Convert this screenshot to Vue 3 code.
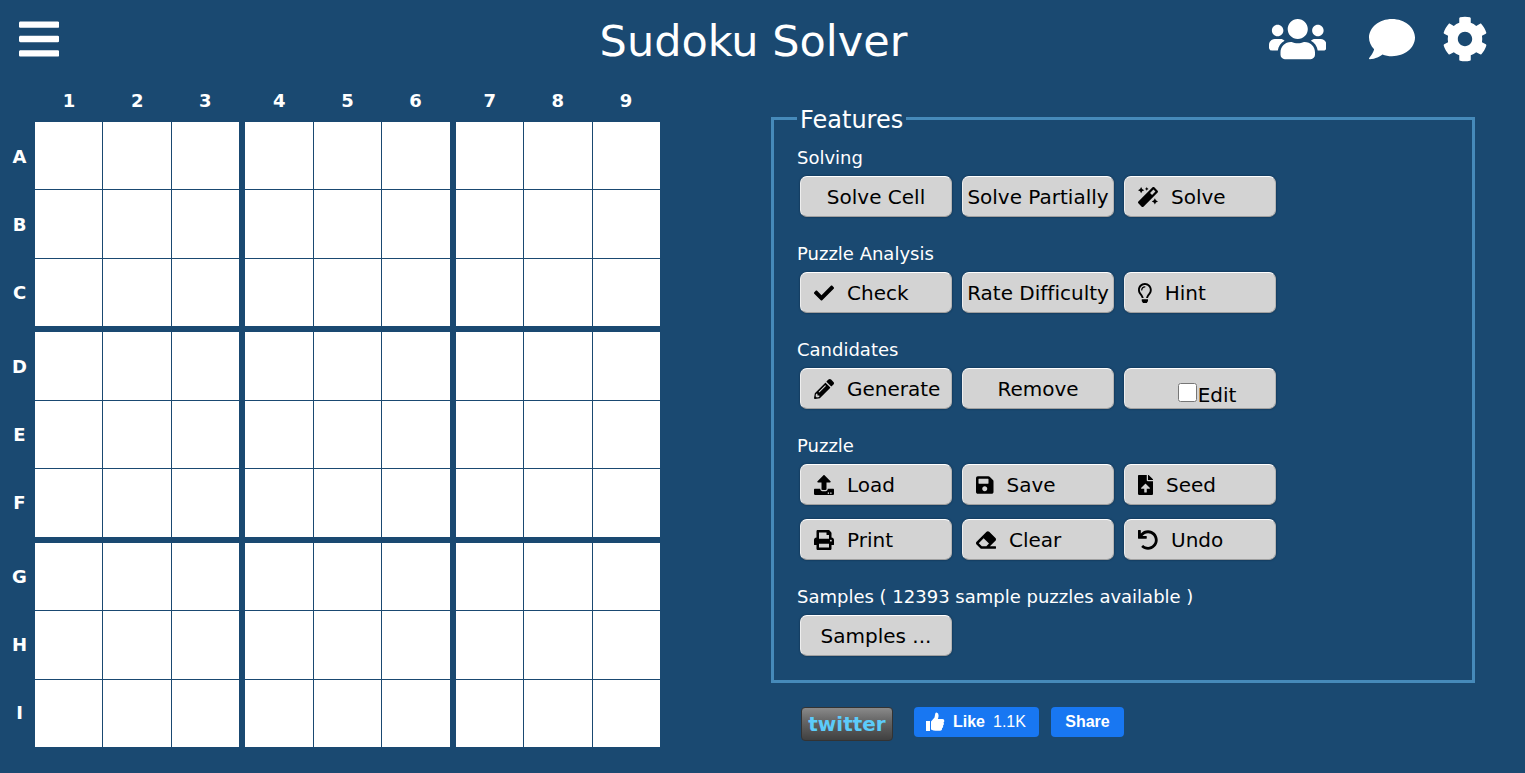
<script setup>
const blocks = [0, 1, 2]
const rowNames = ['A', 'B', 'C', 'D', 'E', 'F', 'G', 'H', 'I']

const icons = {
  bars: { w: 448, d: 'M16 132h416c8.837 0 16-7.163 16-16V76c0-8.837-7.163-16-16-16H16C7.163 60 0 67.163 0 76v40c0 8.837 7.163 16 16 16zm0 160h416c8.837 0 16-7.163 16-16v-40c0-8.837-7.163-16-16-16H16c-8.837 0-16 7.163-16 16v40c0 8.837 7.163 16 16 16zm0 160h416c8.837 0 16-7.163 16-16v-40c0-8.837-7.163-16-16-16H16c-8.837 0-16 7.163-16 16v40c0 8.837 7.163 16 16 16z' },
  users: { w: 640, d: 'M96 224c35.3 0 64-28.7 64-64s-28.7-64-64-64-64 28.7-64 64 28.7 64 64 64zm448 0c35.3 0 64-28.7 64-64s-28.7-64-64-64-64 28.7-64 64 28.7 64 64 64zm32 32h-64c-17.6 0-33.5 7.1-45.1 18.6 40.3 22.1 68.9 62 75.1 109.4h66c17.7 0 32-14.3 32-32v-32c0-35.3-28.7-64-64-64zm-256 0c61.9 0 112-50.1 112-112S381.9 32 320 32 208 82.1 208 144s50.1 112 112 112zm76.8 32h-8.3c-20.8 10-43.9 16-68.5 16s-47.6-6-68.5-16h-8.3C179.6 288 128 339.6 128 403.2V432c0 26.5 21.5 48 48 48h288c26.5 0 48-21.5 48-48v-28.8c0-63.6-51.6-115.2-115.2-115.2zm-223.7-13.4C161.5 263.1 145.6 256 128 256H64c-35.3 0-64 28.7-64 64v32c0 17.7 14.3 32 32 32h65.9c6.3-47.4 34.9-87.3 75.2-109.4z' },
  comment: { w: 512, d: 'M256 32C114.6 32 0 125.1 0 240c0 49.6 21.4 95 57 130.7C44.5 421.1 2.7 466 2.2 466.5c-2.2 2.3-2.8 5.7-1.5 8.7S4.8 480 8 480c66.3 0 116-31.8 140.6-51.4 32.7 12.3 69 19.4 107.4 19.4 141.4 0 256-93.1 256-208S397.4 32 256 32z' },
  cog: { w: 512, d: 'M487.4 315.7l-42.6-24.6c4.3-23.2 4.3-47 0-70.2l42.6-24.6c4.9-2.8 7.1-8.6 5.5-14-11.1-35.6-30-67.8-54.7-94.6-3.8-4.1-10-5.1-14.8-2.3L380.8 110c-17.9-15.4-38.5-27.3-60.8-35.1V25.8c0-5.6-3.9-10.5-9.4-11.7-36.7-8.2-74.3-7.8-109.2 0-5.5 1.2-9.4 6.1-9.4 11.7V75c-22.2 7.9-42.8 19.8-60.8 35.1L88.7 85.5c-4.9-2.8-11-1.9-14.8 2.3-24.7 26.7-43.6 58.9-54.7 94.6-1.7 5.4.6 11.2 5.5 14L67.3 221c-4.3 23.2-4.3 47 0 70.2l-42.6 24.6c-4.9 2.8-7.1 8.6-5.5 14 11.1 35.6 30 67.8 54.7 94.6 3.8 4.1 10 5.1 14.8 2.3l42.6-24.6c17.9 15.4 38.5 27.3 60.8 35.1v49.2c0 5.6 3.9 10.5 9.4 11.7 36.7 8.2 74.3 7.8 109.2 0 5.5-1.2 9.4-6.1 9.4-11.7v-49.2c22.2-7.9 42.8-19.8 60.8-35.1l42.6 24.6c4.9 2.8 11 1.9 14.8-2.3 24.7-26.7 43.6-58.9 54.7-94.6 1.5-5.5-.7-11.3-5.6-14.1zM256 336c-44.1 0-80-35.9-80-80s35.9-80 80-80 80 35.9 80 80-35.9 80-80 80z' },
  magic: { w: 512, d: 'M224 96l16-32 32-16-32-16-16-32-16 32-32 16 32 16 16 32zM80 160l26.66-53.33L160 80l-53.34-26.67L80 0 53.34 53.33 0 80l53.34 26.67L80 160zm352 128l-26.66 53.33L352 368l53.34 26.67L432 448l26.66-53.33L512 368l-53.34-26.67L432 288zm70.62-193.77L417.77 9.38C411.53 3.12 403.34 0 395.15 0c-8.19 0-16.38 3.12-22.63 9.38L9.38 372.52c-12.5 12.5-12.5 32.76 0 45.25l84.85 84.85c6.25 6.25 14.44 9.37 22.62 9.37 8.19 0 16.38-3.12 22.63-9.37l363.14-363.15c12.5-12.48 12.5-32.75 0-45.24zM359.45 203.46l-50.91-50.91 86.6-86.6 50.91 50.91-86.6 86.6z' },
  check: { w: 512, d: 'M173.898 439.404l-166.4-166.4c-9.997-9.997-9.997-26.206 0-36.204l36.203-36.204c9.997-9.998 26.207-9.998 36.204 0L192 312.69 432.095 72.596c9.997-9.997 26.207-9.997 36.204 0l36.203 36.204c9.997 9.997 9.997 26.206 0 36.204l-294.4 294.401c-9.998 9.997-26.207 9.997-36.204-.001z' },
  bulb: { w: 352, d: 'M176 80c-52.94 0-96 43.06-96 96 0 8.84 7.16 16 16 16s16-7.16 16-16c0-35.3 28.72-64 64-64 8.84 0 16-7.16 16-16s-7.16-16-16-16zM96.06 459.17c0 3.15.93 6.22 2.68 8.84l24.51 36.84c2.97 4.46 7.97 7.14 13.32 7.14h78.85c5.36 0 10.36-2.68 13.32-7.14l24.51-36.84c1.74-2.62 2.67-5.7 2.68-8.84l.05-43.18H96.02l.04 43.18zM176 0C73.72 0 0 82.97 0 176c0 44.37 16.45 84.85 43.56 115.78 16.64 18.99 42.74 58.8 52.42 92.16v.06h48v-.12c-.01-4.77-.72-9.51-2.15-14.07-5.59-17.81-22.82-64.77-62.17-109.67-20.54-23.43-31.52-53.15-31.61-84.14-.2-73.64 59.67-128 127.95-128 70.58 0 128 57.42 128 128 0 30.97-11.24 60.85-31.65 84.14-39.11 44.61-56.42 91.47-62.1 109.46a47.507 47.507 0 0 0-2.22 14.3v.1h48v-.05c9.68-33.37 35.78-73.18 52.42-92.16C335.55 260.85 352 220.37 352 176 352 78.8 273.2 0 176 0z' },
  pencil: { w: 512, d: 'M497.9 142.1l-46.1 46.1c-4.7 4.7-12.3 4.7-17 0l-111-111c-4.7-4.7-4.7-12.3 0-17l46.1-46.1c18.7-18.7 49.1-18.7 67.9 0l60.1 60.1c18.8 18.7 18.8 49.1 0 67.9zM284.2 99.8L21.6 362.4.4 483.9c-2.9 16.4 11.4 30.6 27.8 27.8l121.5-21.3 262.6-262.6c4.7-4.7 4.7-12.3 0-17l-111-111c-4.8-4.7-12.4-4.7-17.1 0zM124.1 339.9c-5.5-5.5-5.5-14.3 0-19.8l154-154c5.5-5.5 14.3-5.5 19.8 0s5.5 14.3 0 19.8l-154 154c-5.5 5.5-14.3 5.5-19.8 0zM88 424h48v36.3l-64.5 11.3-31.1-31.1L51.7 376H88v48z' },
  upload: { w: 512, d: 'M296 384h-80c-13.3 0-24-10.7-24-24V192h-87.7c-17.8 0-26.7-21.5-14.1-34.1L242.3 5.7c7.5-7.5 19.8-7.5 27.3 0l152.2 152.2c12.6 12.6 3.7 34.1-14.1 34.1H320v168c0 13.3-10.7 24-24 24zm216-8v112c0 13.3-10.7 24-24 24H24c-13.3 0-24-10.7-24-24V376c0-13.3 10.7-24 24-24h136v8c0 30.9 25.1 56 56 56h80c30.9 0 56-25.1 56-56v-8h136c13.3 0 24 10.7 24 24zm-124 88c0-11-9-20-20-20s-20 9-20 20 9 20 20 20 20-9 20-20zm64 0c0-11-9-20-20-20s-20 9-20 20 9 20 20 20 20-9 20-20z' },
  save: { w: 448, d: 'M433.941 129.941l-83.882-83.882A48 48 0 0 0 316.118 32H48C21.49 32 0 53.49 0 80v352c0 26.51 21.49 48 48 48h352c26.51 0 48-21.49 48-48V163.882a48 48 0 0 0-14.059-33.941zM224 416c-35.346 0-64-28.654-64-64 0-35.346 28.654-64 64-64s64 28.654 64 64c0 35.346-28.654 64-64 64zm96-304.52V212c0 6.627-5.373 12-12 12H76c-6.627 0-12-5.373-12-12V108c0-6.627 5.373-12 12-12h228.52c3.183 0 6.235 1.264 8.485 3.515l3.48 3.48A11.996 11.996 0 0 1 320 111.48z' },
  file: { w: 384, d: 'M224 136V0H24C10.7 0 0 10.7 0 24v464c0 13.3 10.7 24 24 24h336c13.3 0 24-10.7 24-24V160H248c-13.2 0-24-10.8-24-24zm65.18 216.01H224v80c0 8.84-7.16 16-16 16h-32c-8.84 0-16-7.16-16-16v-80H94.82c-14.28 0-21.41-17.29-11.27-27.36l96.42-95.7c6.65-6.61 17.39-6.61 24.04 0l96.42 95.7c10.15 10.07 3.03 27.36-11.25 27.36zM377 105L279.1 7c-4.5-4.5-10.6-7-17-7H256v128h128v-6.1c0-6.3-2.5-12.4-7-16.9z' },
  print: { w: 512, d: 'M448 192V77.25c0-8.49-3.37-16.62-9.37-22.63L393.37 9.37c-6-6-14.14-9.37-22.63-9.37H96C78.33 0 64 14.33 64 32v160c-35.35 0-64 28.65-64 64v112c0 8.84 7.16 16 16 16h48v96c0 17.67 14.33 32 32 32h320c17.67 0 32-14.33 32-32v-96h48c8.84 0 16-7.16 16-16V256c0-35.35-28.65-64-64-64zm-64 256H128v-96h256v96zm0-224H128V64h192v48c0 8.84 7.16 16 16 16h48v96zm48 72c-13.25 0-24-10.75-24-24 0-13.26 10.75-24 24-24s24 10.74 24 24c0 13.25-10.75 24-24 24z' },
  eraser: { w: 512, d: 'M497.941 273.941c18.745-18.745 18.745-49.137 0-67.882l-160-160c-18.745-18.745-49.136-18.746-67.883 0l-256 256c-18.745 18.745-18.745 49.137 0 67.882l96 96A48.004 48.004 0 0 0 144 480h356c6.627 0 12-5.373 12-12v-40c0-6.627-5.373-12-12-12H355.883l142.058-142.059zm-302.627-62.627l137.373 137.373L265.373 416H150.628l-80-80 124.686-124.686z' },
  undo: { w: 512, d: 'M212.333 224.333H12c-6.627 0-12-5.373-12-12V12C0 5.373 5.373 0 12 0h48c6.627 0 12 5.373 12 12v78.112C117.773 39.279 184.26 7.47 258.175 8.007c136.906.994 246.448 111.623 246.157 248.532C504.041 393.258 393.12 504 256.333 504c-64.089 0-122.496-24.313-166.51-64.215-5.099-4.622-5.334-12.554-.467-17.42l33.967-33.967c4.474-4.474 11.662-4.717 16.401-.525C170.76 415.336 211.58 432 256.333 432c97.268 0 176-78.716 176-176 0-97.267-78.716-176-176-176-58.496 0-110.28 28.476-142.274 72.333h98.274c6.627 0 12 5.373 12 12v48c0 6.627-5.373 12-12 12z' },
}

const sections = [
  { title: 'Solving', items: [{ text: 'Solve Cell' }, { text: 'Solve Partially' }, { text: 'Solve', icon: 'magic' }] },
  { title: 'Puzzle Analysis', items: [{ text: 'Check', icon: 'check' }, { text: 'Rate Difficulty' }, { text: 'Hint', icon: 'bulb' }] },
  { title: 'Candidates', items: [{ text: 'Generate', icon: 'pencil' }, { text: 'Remove' }, { text: 'Edit', toggle: true }] },
  {
    title: 'Puzzle',
    items: [
      { text: 'Load', icon: 'upload' }, { text: 'Save', icon: 'save' }, { text: 'Seed', icon: 'file' },
      { text: 'Print', icon: 'print' }, { text: 'Clear', icon: 'eraser' }, { text: 'Undo', icon: 'undo' },
    ],
  },
  { title: 'Samples ( 12393 sample puzzles available )', items: [{ text: 'Samples ...' }] },
]
</script>

<template>
  <div class="page">
    <header class="top">
      <button class="icon-btn" type="button" aria-label="Menu">
        <svg class="big" :viewBox="`0 0 ${icons.bars.w} 512`"><path :d="icons.bars.d" /></svg>
      </button>
      <h1>Sudoku Solver</h1>
      <nav class="actions">
        <button v-for="n in ['users', 'comment', 'cog']" :key="n" :class="['icon-btn', n]" type="button" :aria-label="n">
          <svg class="big" :viewBox="`0 0 ${icons[n].w} 512`"><path :d="icons[n].d" /></svg>
        </button>
      </nav>
    </header>

    <main class="content">
      <section class="puzzle">
        <div class="col-names">
          <div v-for="b in blocks" :key="b" class="triple">
            <span v-for="c in 3" :key="c">{{ b * 3 + c }}</span>
          </div>
        </div>
        <div class="row-names">
          <div v-for="b in blocks" :key="b" class="triple-rows">
            <span v-for="c in 3" :key="c">{{ rowNames[b * 3 + c - 1] }}</span>
          </div>
        </div>
        <div class="board">
          <div v-for="k in 9" :key="k" class="block">
            <input v-for="c in 9" :key="c" class="cell" type="text" maxlength="1" :aria-label="`Block ${k} cell ${c}`" />
          </div>
        </div>
      </section>

      <section class="side">
        <fieldset class="features">
          <legend>Features</legend>
          <div v-for="s in sections" :key="s.title" class="group">
            <h2>{{ s.title }}</h2>
            <div class="buttons">
              <template v-for="i in s.items" :key="i.text">
                <label v-if="i.toggle" class="btn toggle"><input type="checkbox" />{{ i.text }}</label>
                <button v-else type="button" :class="['btn', { left: i.icon }]">
                  <svg v-if="i.icon" class="small" :viewBox="`0 0 ${icons[i.icon].w} 512`"><path :d="icons[i.icon].d" /></svg>
                  <span>{{ i.text }}</span>
                </button>
              </template>
            </div>
          </div>
        </fieldset>

        <div class="social">
          <a class="twitter" href="#">twitter</a>
          <button class="fb like" type="button">
            <svg class="thumb" viewBox="0 0 20 20">
              <path d="M1 9h4v10H1zM6 9.500L9.500 5.500L10.300 1.500Q10.600.500 11.600.500Q13.600.800 13.600 3.600Q13.600 5.500 12.800 7H17.500Q19.500 7.200 19.300 9Q19.200 10 18.500 10.500Q19.200 11.500 18.800 12.400Q18.500 13.200 17.900 13.500Q18.400 14.300 18 15.200Q17.700 15.900 17 16.200Q17.400 18.600 15 18.700H10.500Q8.500 18.700 6 17.500Z" />
            </svg>
            <b>Like</b><span>1.1K</span>
          </button>
          <button class="fb share" type="button"><b>Share</b></button>
        </div>
      </section>
    </main>
  </div>
</template>

<style>
body {
  margin: 0;
  background: #1a4971;
}
</style>

<style scoped>
* {
  box-sizing: border-box;
}
.page {
  min-height: 100vh;
  background: #1a4971;
  color: #fff;
  font-family: Verdana, "DejaVu Sans", sans-serif;
  font-variant-ligatures: none;
}
button {
  font-family: inherit;
  font-variant-ligatures: inherit;
  cursor: pointer;
}
svg {
  display: block;
  fill: currentColor;
}
.top {
  display: grid;
  grid-template-columns: 1fr auto 1fr;
  align-items: center;
  height: 78px;
  padding: 0 37px 0 19px;
}
h1 {
  margin: 0;
  padding-top: 4px;
  font-size: 43px;
  line-height: 50px;
  font-weight: 400;
}
.icon-btn {
  justify-self: start;
  padding: 0;
  border: 0;
  background: none;
  color: #fff;
}
.big {
  height: 46px;
}
.actions {
  display: flex;
  justify-content: flex-end;
}
.comment {
  margin: 0 27px 0 43px;
}
.content {
  display: grid;
  grid-template-columns: 165fr 176fr;
  column-gap: 111px;
  align-items: start;
  padding: 2px 50px 0 0;
}
.puzzle {
  display: grid;
  grid-template-columns: 35px 1fr;
  grid-template-rows: 42px auto;
  font-size: 18px;
  font-weight: 700;
}
.col-names {
  grid-column: 2;
  display: grid;
  grid-template-columns: repeat(3, 1fr);
  gap: 6px;
}
.triple {
  display: grid;
  grid-template-columns: repeat(3, 1fr);
  line-height: 42px;
  text-align: center;
}
.row-names {
  display: grid;
  grid-template-rows: repeat(3, 1fr);
  gap: 6px;
  padding-left: 4px;
}
.triple-rows {
  display: grid;
  grid-template-rows: repeat(3, 1fr);
  place-items: center;
}
.board {
  display: grid;
  grid-template: repeat(3, 1fr) / repeat(3, 1fr);
  gap: 6px;
  aspect-ratio: 1;
}
.block {
  display: grid;
  grid-template: repeat(3, 1fr) / repeat(3, 1fr);
  gap: 1px;
}
.cell {
  width: 100%;
  min-width: 0;
  height: 100%;
  min-height: 0;
  padding: 0;
  border: 0;
  border-radius: 0;
  background: #fff;
  font-size: 40px;
  text-align: center;
}
.side {
  padding-top: 21px;
}
.features {
  min-width: 0;
  margin: 0;
  padding: 12px 23px 24px;
  border: 3px solid #468aba;
}
legend {
  padding: 4px 3px 0;
  font-size: 24px;
  line-height: 30px;
}
.group + .group {
  margin-top: 26px;
}
h2 {
  margin: 0 0 7px;
  font-size: 18px;
  line-height: 22px;
  font-weight: 400;
}
.buttons {
  display: grid;
  grid-template-columns: repeat(3, 152px);
  gap: 14px 10px;
  padding-left: 3px;
}
.btn {
  display: flex;
  align-items: center;
  justify-content: center;
  gap: 13px;
  height: 41px;
  padding: 0;
  border: 1px solid;
  border-color: #fff #b4b4b4 #a0a0a0 #eee;
  border-radius: 7px;
  background: #d3d3d3;
  box-shadow: 0 0 2px #0b2740;
  color: #000;
  font-size: 20px;
  line-height: 24px;
  white-space: nowrap;
}
.left {
  justify-content: flex-start;
  padding-left: 13px;
}
.small {
  height: 20px;
}
.toggle {
  align-items: flex-end;
  gap: 1px;
  padding: 0 0 1px 14px;
}
.toggle input {
  width: 19px;
  height: 19px;
  margin: 0 0 5px;
}
.social {
  display: flex;
  align-items: flex-start;
  margin-top: 24px;
  padding-left: 30px;
}
.twitter {
  width: 92px;
  height: 34px;
  margin-right: 21px;
  border: 1px solid #333;
  border-radius: 4px;
  background: linear-gradient(#8a8a8a, #666 40%, #404040);
  color: #5ccbfa;
  font-size: 20px;
  line-height: 32px;
  font-weight: 700;
  text-align: center;
  text-decoration: none;
}
.fb {
  display: flex;
  align-items: center;
  justify-content: center;
  gap: 8px;
  height: 30px;
  padding: 0 13px;
  border: 0;
  border-radius: 4px;
  background: #1877f2;
  color: #fff;
  font-family: "Liberation Sans", Arial, sans-serif;
  font-size: 16px;
  line-height: 20px;
}
.like {
  margin-right: 12px;
  padding-left: 11px;
}
.share {
  min-width: 73px;
}
.thumb {
  width: 20px;
  height: 20px;
}
</style>
